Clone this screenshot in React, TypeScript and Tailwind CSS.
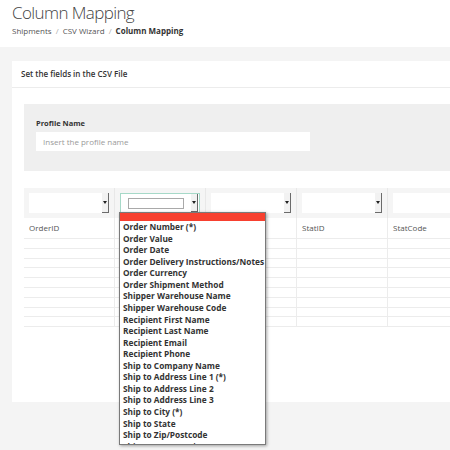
import React from "react";

const options = [
  "Order Number (*)",
  "Order Value",
  "Order Date",
  "Order Delivery Instructions/Notes",
  "Order Currency",
  "Order Shipment Method",
  "Shipper Warehouse Name",
  "Shipper Warehouse Code",
  "Recipient First Name",
  "Recipient Last Name",
  "Recipient Email",
  "Recipient Phone",
  "Ship to Company Name",
  "Ship to Address Line 1 (*)",
  "Ship to Address Line 2",
  "Ship to Address Line 3",
  "Ship to City (*)",
  "Ship to State",
  "Ship to Zip/Postcode",
  "Ship to Country (*)",
];

const columns = ["OrderID", "", "", "StatID", "StatCode"];

function ArrowButton() {
  return (
    <div className="flex w-[7px] shrink-0 items-center justify-center border-r border-b border-[#6b6b6b] bg-[#f2f2f2]">
      <span className="block h-0 w-0 border-x-[2px] border-t-[3px] border-x-transparent border-t-[#222]" />
    </div>
  );
}

function FakeSelect({ focused = false }: { focused?: boolean }) {
  if (focused) {
    return (
      <div className="flex h-[20px] border border-[#a6d9c8] bg-white pr-[1px]">
        <div className="flex flex-1 items-center pl-[7px] pr-[7px]">
          <div className="h-[11px] w-full border border-[#a9a9a9] bg-white" />
        </div>
        <ArrowButton />
      </div>
    );
  }
  return (
    <div className="flex h-[20px] bg-white">
      <div className="flex-1" />
      <ArrowButton />
    </div>
  );
}

export default function App() {
  return (
    <div
      className="relative h-[450px] w-[450px] overflow-hidden bg-[#f4f4f4] text-[#333]"
      style={{ fontFamily: '"Open Sans", "Noto Sans", sans-serif' }}
    >
      {/* Page header */}
      <header className="h-[47px] bg-white px-3">
        <h1 className="pt-[1px] text-[17px] font-light leading-[24px] tracking-[-0.6px] text-[#444]">
          Column Mapping
        </h1>
        <nav className="flex items-center gap-[4px] text-[8px] leading-[12px] text-[#555]">
          <span>Shipments</span>
          <span className="text-[#aaa]">/</span>
          <span>CSV Wizard</span>
          <span className="text-[#aaa]">/</span>
          <span className="font-bold text-[#333]">Column Mapping</span>
        </nav>
      </header>

      {/* Card */}
      <section className="ml-3 mt-[14px] h-[341px] w-[500px] bg-white">
        <div className="flex h-[27px] items-center border-b border-[#ececec] pl-[9px] text-[8px] font-semibold text-[#333]">
          Set the fields in the CSV File
        </div>

        <div className="pl-3 pt-[16px]">
          <div className="h-[67px] bg-[#efefef] pl-3 pt-[14px]">
            <p className="text-[7.5px] font-bold leading-[10px] text-[#333]">Profile Name</p>
            <div className="mt-[4px] flex h-[19px] w-[274px] items-center bg-white pl-[7px] text-[8px] text-[#9a9a9a]">
              Insert the profile name
            </div>
          </div>

          {/* Mapping table */}
          <div className="mt-[17px] w-[500px]">
            <div className="flex h-[30px] bg-[#f5f5f5]">
              {columns.map((c, i) => (
                <div key={i} className="w-[91px] shrink-0 border-r border-[#e8e8e8] px-[5px] pt-[5px]">
                  <FakeSelect focused={i === 1} />
                </div>
              ))}
            </div>
            <div className="flex h-[21px] border-b border-[#ececec]">
              {columns.map((c, i) => (
                <div
                  key={i}
                  className="flex w-[91px] shrink-0 items-center border-r border-[#ececec] pl-[5px] text-[8px] text-[#555]"
                >
                  {c}
                </div>
              ))}
            </div>
            {Array.from({ length: 9 }).map((_, r) => (
              <div key={r} className="flex h-[9.8px] border-b border-[#ececec]">
                {columns.map((_, i) => (
                  <div key={i} className="w-[91px] shrink-0 border-r border-[#ececec]" />
                ))}
              </div>
            ))}
          </div>
        </div>
      </section>

      {/* Open dropdown list */}
      <div className="absolute left-[119px] top-[212px] h-[233px] w-[147px] overflow-hidden border border-[#7a7a7a] bg-white shadow-[1px_1px_3px_rgba(0,0,0,0.35)]">
        <div className="h-[8px] bg-[#f7402f]" />
        <ul className="pl-[3px] text-[8.3px] font-bold leading-[11.56px] text-[#333]">
          {options.map((o) => (
            <li key={o} className="whitespace-nowrap">
              {o}
            </li>
          ))}
        </ul>
      </div>
    </div>
  );
}
